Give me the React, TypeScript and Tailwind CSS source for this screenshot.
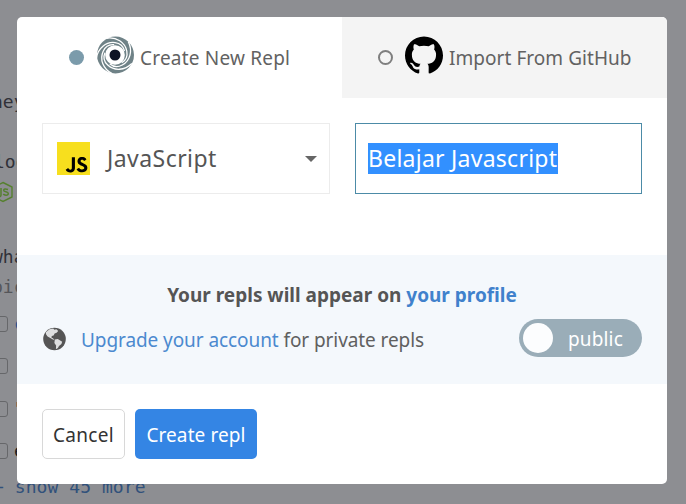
import React from "react";
import { SiGithub, SiJavascript } from "react-icons/si";

function SwirlLogo() {
  return (
    <svg viewBox="-20 -20 40 40" className="ml-[11px] h-10 w-10 shrink-0">
      <circle cx="0.5" r="18.5" fill="#6f8287" />
      <circle r="9.8" fill="#fff" />
      {[0, 72, 144, 216, 288].map((angle) => (
        <path
          key={angle}
          transform={`rotate(${angle})`}
          d="M-18.6 3 C-17 -7 -9 -13.5 0 -12.4 C5 -11.8 8.5 -8.5 9.5 -4"
          fill="none"
          stroke="#fff"
          strokeWidth="1.3"
        />
      ))}
      <circle r="5.5" fill="#0e1325" />
    </svg>
  );
}

function Globe() {
  return (
    <svg viewBox="0 0 24 24" className="mt-[2px] h-6 w-6 shrink-0">
      <circle cx="12.5" cy="12" r="11.3" fill="#555" />
      <path
        d="M3.8 5.2 7.5 2.2l3.7-.7 1.2 1.3 2-.5 1.8 1.8-1.6 1.7-2 .6-1 2.2-1.8.5-.4 1.5 1.8.8 1.2 1.5-1.5-.3-2.6-1.7-2.7-1.5-1.6-2.2Z"
        fill="#dedfe0"
      />
      <path d="m12.8 12.4 3-.3 2.4 1.4 2 1.2-.8 2.3-2.4 2-1.1 2-2 1.2.2-3.7-1.7-2.4Z" fill="#dedfe0" />
    </svg>
  );
}

function Backdrop() {
  const box = "h-[16px] w-[18px] -ml-[10px] shrink-0 rounded-[3px] border border-[#66676a]";
  return (
    <div
      aria-hidden="true"
      className="absolute inset-0 flex flex-col overflow-hidden pt-[91px] font-['DejaVu_Sans_Mono',monospace] text-[18px] leading-[22px] whitespace-pre text-[#303138]"
    >
      <div className="-ml-[8px]">ney</div>
      <div className="mt-[38px] -ml-[6px]">loo</div>
      <svg viewBox="0 0 20 22" className="mt-[8px] -ml-[7px] h-[22px] w-5">
        <path d="M10 1.5 19 6v10l-9 4.5L1 16V6Z" fill="none" stroke="#56802f" strokeWidth="1.4" />
        <path d="M8 7v7q0 2-2.5 1.5M15 8.5q-4-1.5-4.3.7c0 2.3 4.6.8 4.6 3.3 0 2.2-4 2-5 .5" fill="none" stroke="#56802f" strokeWidth="1.5" />
      </svg>
      <div className="mt-[43px] -ml-[8px]">wha</div>
      <div className="mt-[8px] -ml-[8px] text-[#55565a]">pic</div>
      <div className="mt-[15px] flex h-[22px] items-center gap-[6px] text-[#28558c]"><i className={box} />c</div>
      <div className="mt-[20px] flex h-[22px] items-center"><i className={box} /></div>
      <div className="mt-[21px] flex h-[22px] items-center gap-[4px] text-[#a13b35]"><i className={box} />'</div>
      <div className="mt-[20px] flex h-[22px] items-center gap-[6px] text-[#191a1e]"><i className={box} />e</div>
      <div className="mt-[14px] -ml-[7px] tracking-[0.06px] text-[#31517b]">+ show 45 more</div>
    </div>
  );
}

export default function App() {
  return (
    <div className="relative h-[504px] w-[686px] overflow-hidden bg-[#8d8e92] p-[17px] font-['Noto_Sans',sans-serif] text-[19px] text-[#555]">
      <Backdrop />
      <main className="relative flex h-[467px] w-[650px] flex-col overflow-hidden rounded-[5px] bg-white">
        <div className="flex h-[81px] shrink-0">
          <div className="flex w-[325px] items-center pb-[6px] pl-[52px]">
            <span className="mt-[6px] h-[15px] w-[15px] rounded-full bg-[#7b9bab]" />
            <SwirlLogo />
            <span className="mt-[7px] ml-[5px] whitespace-nowrap tracking-[0.2px] text-[#626262]">Create New Repl</span>
          </div>
          <div className="flex w-[325px] items-center bg-[#f4f4f4] pb-[6px] pl-[36px]">
            <span className="mt-[6px] h-[15px] w-[15px] rounded-full border-2 border-[#7f7f7f]" />
            <SiGithub className="ml-[12px] h-[38px] w-[38px] text-black" />
            <span className="mt-[7px] ml-[6px] whitespace-nowrap tracking-[0.05px] text-[#626262]">Import From GitHub</span>
          </div>
        </div>
        <div className="flex h-[157px] shrink-0 gap-[25px] px-[25px] pt-[25px]">
          <div className="flex h-[71px] w-[288px] items-center border border-[#ececec] pl-[14px] text-[23px]">
            <span className="flex h-[33px] w-[33px] bg-[linear-gradient(#000,#000)] bg-[length:25px_23px] bg-[position:6px_8px] bg-no-repeat">
              <SiJavascript className="h-[33px] w-[33px] text-[#f7df1e]" />
            </span>
            <span className="ml-[17px] flex-1 tracking-[0.45px]">JavaScript</span>
            <span className="mr-[12px] border-x-[6px] border-t-[6px] border-x-transparent border-t-[#666]" />
          </div>
          <div className="flex h-[71px] w-[287px] items-center border border-[#4c8ba7] pl-[12px] text-[23px]">
            <span className="flex h-[31px] w-[190px] items-center whitespace-nowrap bg-[#3290ff] tracking-[0.25px] text-white">Belajar Javascript</span>
          </div>
        </div>
        <section className="flex h-[129px] shrink-0 flex-col bg-[#f4f8fc] px-[25px] pt-[26px]">
          <p className="text-center leading-7 font-bold">
            Your repls will appear on <a className="text-[#4081cc]">your profile</a>
          </p>
          <div className="mt-[10px] flex h-[38px] items-center">
            <Globe />
            <p className="mt-[4px] ml-[15px] flex-1 whitespace-nowrap tracking-[-0.08px] text-[#606060]">
              <a className="text-[#4b89cf]">Upgrade your account</a> for private repls
            </p>
            <div className="flex h-[38px] w-[123px] items-center rounded-full bg-[#9aadb8] pl-[4px] text-white">
              <span className="h-[30px] w-[30px] rounded-full bg-[#fcfdfe]" />
              <span className="mt-[2px] ml-[15px] tracking-[0.15px]">public</span>
            </div>
          </div>
        </section>
        <footer className="flex gap-[10px] p-[25px]">
          <button className="h-[50px] w-[83px] rounded-[5px] border border-[#d8d8d8] pt-[2px] tracking-[0.3px] text-[#333]">Cancel</button>
          <button className="h-[50px] w-[122px] rounded-[5px] bg-[#3485e4] pt-[2px] tracking-[0.1px] whitespace-nowrap text-white">Create repl</button>
        </footer>
      </main>
    </div>
  );
}
